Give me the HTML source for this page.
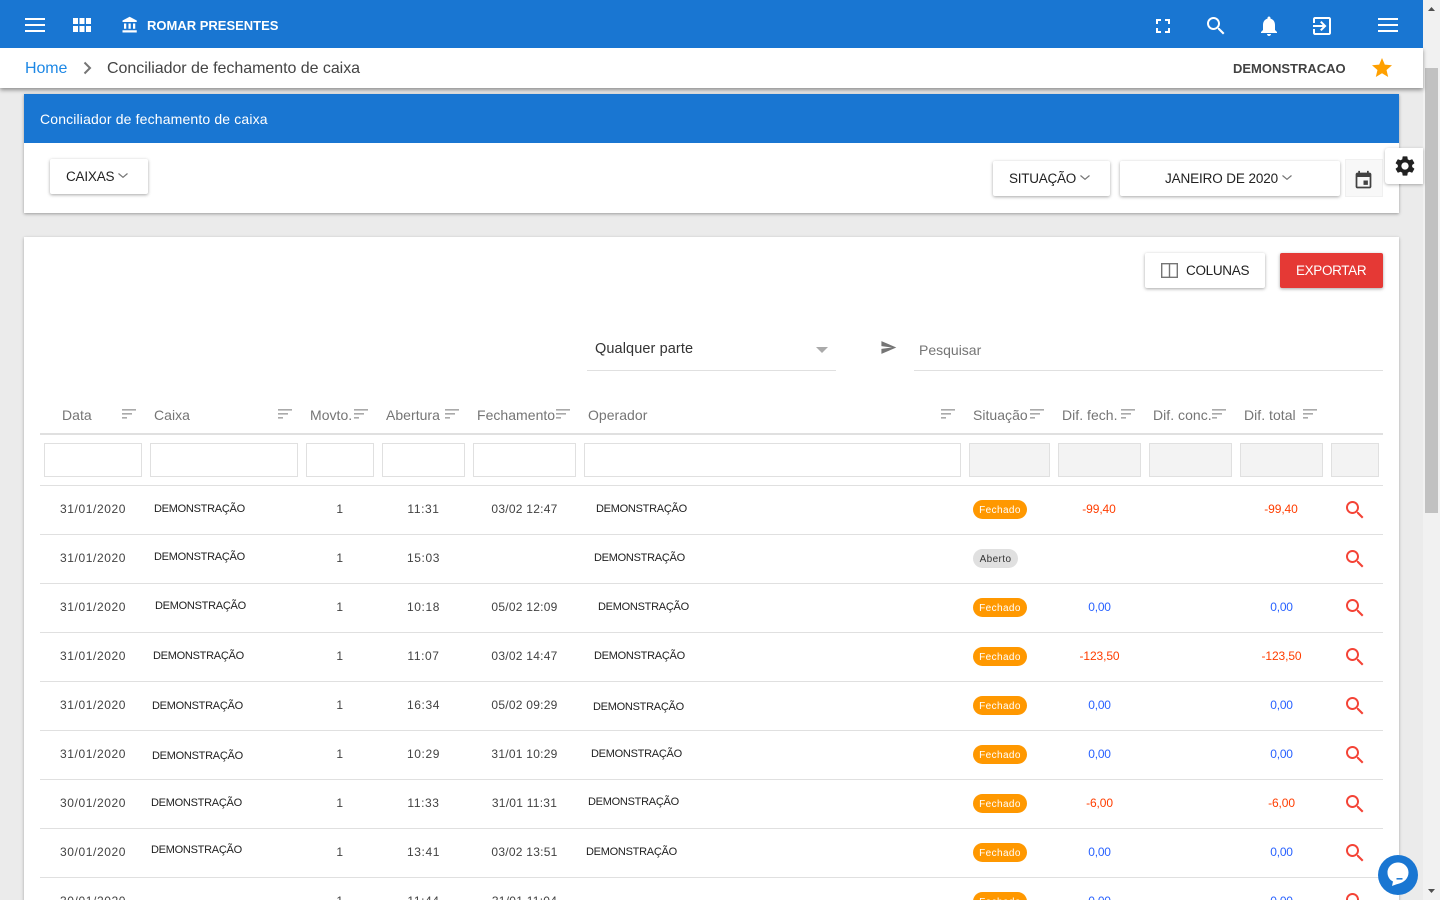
<!DOCTYPE html>
<html lang="pt"><head><meta charset="utf-8"><title>Conciliador de fechamento de caixa</title>
<style>
html,body{margin:0;padding:0;width:1440px;height:900px;overflow:hidden;background:#ebebeb;font-family:"Liberation Sans",sans-serif}
div,span,svg{position:absolute}
#w{left:0;top:0;width:1440px;height:900px;overflow:hidden;background:#ebebeb}
.t{white-space:nowrap;line-height:16px;height:16px}
.c{transform:translateX(-50%)}
.d{font-size:12px;letter-spacing:.6px;color:#424242}
.n{font-size:11px;letter-spacing:-.27px;color:#212121;margin-top:1px}
.h{font-size:14px;letter-spacing:.03px;color:#757575;top:407px}
.b{left:973px;height:19px;border-radius:10px;line-height:21px;font-size:10px;letter-spacing:.4px;text-align:center}
.f{background:#ff9800;color:#fff;width:54px}
.a{background:#e0e0e0;color:#333;width:45px}
.r{font-size:12px;color:#ff3d00;letter-spacing:-.1px}
.u{font-size:12px;color:#2962ff;letter-spacing:-.2px}
.l{left:40px;width:1343px;height:1px;background:#e0e0e0}
.box{top:443px;height:32px;border:1px solid #e0e0e0;box-sizing:content-box}
.g{background:#f3f3f3}
.btn{background:#fff;border-radius:2px;box-shadow:0 1px 3px rgba(0,0,0,.35)}
.bt{font-size:13.5px;color:#212121;margin-top:1px}
.s{width:14px;height:10px}
.m{width:24px;height:24px;left:1343px}
</style></head><body>
<div id="w">
<svg width="0" height="0" style="left:0;top:0"><defs>
<symbol id="q" viewBox="0 0 24 24"><path fill="#f44336" d="M15.5 14h-.79l-.28-.27C15.41 12.59 16 11.11 16 9.5 16 5.91 13.09 3 9.5 3S3 5.91 3 9.5 5.91 16 9.5 16c1.61 0 3.09-.59 4.23-1.57l.27.28v.79l5 4.99L20.49 19l-4.99-5zm-6 0C7.01 14 5 11.99 5 9.5S7.01 5 9.5 5 14 7.01 14 9.5 11.99 14 9.5 14z"/></symbol>
<symbol id="o" viewBox="0 0 14 10"><path fill="#aaa" d="M0 0h14v1.6H0zM0 4h10v1.6H0zM0 8h5v1.6H0z"/></symbol>
<symbol id="v" viewBox="0 0 10 5"><path fill="none" stroke="#757575" stroke-width="1.2" d="M.5.5L5 4.3 9.5.5"/></symbol>
</defs></svg>

<!-- scrollbar -->
<div style="left:1423px;top:0;width:17px;height:900px;background:#f1f1f1"></div>
<div style="left:1425px;top:68px;width:13px;height:445px;background:#c1c1c1"></div>
<svg style="left:1427px;top:6px" width="9" height="6"><path fill="#505050" d="M4.5 1L8 5H1z"/></svg>
<svg style="left:1427px;top:888px" width="9" height="6"><path fill="#505050" d="M1 1h7L4.5 5z"/></svg>

<!-- card 1 -->
<div style="left:24px;top:94px;width:1375px;height:119px;background:#fff;box-shadow:0 1px 3px rgba(0,0,0,.35)"></div>
<div style="left:24px;top:94px;width:1375px;height:49px;background:#1976d2"></div>
<div class="t" style="left:40px;top:111px;font-size:14px;letter-spacing:.15px;color:#fff">Conciliador de fechamento de caixa</div>

<div class="btn" style="left:50px;top:159px;width:98px;height:35px"></div>
<div class="t bt" style="left:66px;top:168px;letter-spacing:-.2px">CAIXAS</div>
<svg style="left:118px;top:173px" width="10" height="5"><use href="#v"/></svg>

<div class="btn" style="left:993px;top:161px;width:117px;height:35px"></div>
<div class="t bt" style="left:1009px;top:170px;letter-spacing:-.25px">SITUAÇÃO</div>
<svg style="left:1080px;top:175px" width="10" height="5"><use href="#v"/></svg>

<div class="btn" style="left:1120px;top:161px;width:220px;height:35px"></div>
<div class="t bt" style="left:1165px;top:170px;letter-spacing:-.12px">JANEIRO DE 2020</div>
<svg style="left:1282px;top:175px" width="10" height="5"><use href="#v"/></svg>

<div style="left:1345px;top:159px;width:36px;height:36px;background:#f8f8f8;border:1px solid #f0f0f0"></div>
<svg style="left:1353.4px;top:170px" width="21" height="21" viewBox="0 0 24 24"><path fill="#424242" d="M17 12h-5v5h5v-5zM16 1v2H8V1H6v2H5c-1.11 0-1.99.9-1.99 2L3 19c0 1.1.89 2 2 2h14c1.1 0 2-.9 2-2V5c0-1.1-.9-2-2-2h-1V1h-2zm3 18H5V8h14v11z"/></svg>

<!-- card 2 -->
<div style="left:24px;top:237px;width:1375px;height:700px;background:#fff;box-shadow:0 1px 3px rgba(0,0,0,.3)"></div>

<div class="btn" style="left:1145px;top:253px;width:120px;height:35px"></div>
<svg style="left:1161px;top:263px" width="17" height="15"><path fill="none" stroke="#757575" stroke-width="1.4" d="M.7.7h15.6v13.6H.7zM8.5.7v13.6"/></svg>
<div class="t bt" style="left:1186px;top:262px;letter-spacing:-.3px">COLUNAS</div>
<div style="left:1280px;top:253px;width:103px;height:35px;background:#e53935;border-radius:2px;box-shadow:0 1px 3px rgba(0,0,0,.35)"></div>
<div class="t bt" style="left:1296px;top:262px;letter-spacing:-.35px;color:#fff">EXPORTAR</div>

<div class="t" style="left:595px;top:341px;font-size:14.5px;letter-spacing:.1px;color:#333">Qualquer parte</div>
<svg style="left:816px;top:347px" width="12" height="6"><path fill="#aaa" d="M0 0h12L6 6z"/></svg>
<div style="left:587px;top:370px;width:249px;height:1px;background:#e0e0e0"></div>
<svg style="left:879.6px;top:338.5px" width="17" height="17" viewBox="0 0 24 24"><path fill="#757575" d="M2.01 21L23 12 2.01 3 2 10l15 2-15 2z"/></svg>
<div class="t" style="left:919px;top:342px;font-size:14px;color:#757575">Pesquisar</div>
<div style="left:914px;top:370px;width:469px;height:1px;background:#e0e0e0"></div>

<!-- table head -->
<div class="t h" style="left:62px">Data</div>
<div class="t h" style="left:154px">Caixa</div>
<div class="t h" style="left:310px">Movto.</div>
<div class="t h" style="left:386px">Abertura</div>
<div class="t h" style="left:477px">Fechamento</div>
<div class="t h" style="left:588px">Operador</div>
<div class="t h" style="left:973px">Situação</div>
<div class="t h" style="left:1062px">Dif. fech.</div>
<div class="t h" style="left:1153px">Dif. conc.</div>
<div class="t h" style="left:1244px">Dif. total</div>
<svg class="s" style="left:122px;top:409px"><use href="#o"/></svg>
<svg class="s" style="left:278px;top:409px"><use href="#o"/></svg>
<svg class="s" style="left:354px;top:409px"><use href="#o"/></svg>
<svg class="s" style="left:445px;top:409px"><use href="#o"/></svg>
<svg class="s" style="left:556px;top:409px"><use href="#o"/></svg>
<svg class="s" style="left:941px;top:409px"><use href="#o"/></svg>
<svg class="s" style="left:1030px;top:409px"><use href="#o"/></svg>
<svg class="s" style="left:1121px;top:409px"><use href="#o"/></svg>
<svg class="s" style="left:1212px;top:409px"><use href="#o"/></svg>
<svg class="s" style="left:1303px;top:409px"><use href="#o"/></svg>
<div class="l" style="top:433px;height:2px"></div>

<!-- filters -->
<div class="box" style="left:44px;width:96px"></div>
<div class="box" style="left:150px;width:146px"></div>
<div class="box" style="left:306px;width:66px"></div>
<div class="box" style="left:382px;width:81px"></div>
<div class="box" style="left:473px;width:101px"></div>
<div class="box" style="left:584px;width:375px"></div>
<div class="box g" style="left:969px;width:79px"></div>
<div class="box g" style="left:1058px;width:81px"></div>
<div class="box g" style="left:1149px;width:81px"></div>
<div class="box g" style="left:1240px;width:81px"></div>
<div class="box g" style="left:1331px;width:46px"></div>

<!-- row lines -->
<div class="l" style="top:485px"></div>
<div class="l" style="top:534px"></div>
<div class="l" style="top:583px"></div>
<div class="l" style="top:632px"></div>
<div class="l" style="top:681px"></div>
<div class="l" style="top:730px"></div>
<div class="l" style="top:779px"></div>
<div class="l" style="top:828px"></div>
<div class="l" style="top:877px"></div>

<!-- row 1 -->
<div class="t d" style="left:60px;top:501px">31/01/2020</div>
<div class="t n" style="left:154px;top:500px">DEMONSTRAÇÃO</div>
<div class="t d c" style="left:340px;top:501px">1</div>
<div class="t d c" style="left:423.5px;top:501px">11:31</div>
<div class="t d c" style="left:524.5px;top:501px;letter-spacing:.25px">03/02 12:47</div>
<div class="t n" style="left:596px;top:500px">DEMONSTRAÇÃO</div>
<div class="b f" style="top:500px">Fechado</div>
<div class="t r c" style="left:1099px;top:501px">-99,40</div>
<div class="t r c" style="left:1281px;top:501px">-99,40</div>
<svg class="m" style="top:498px"><use href="#q"/></svg>

<!-- row 2 -->
<div class="t d" style="left:60px;top:550px">31/01/2020</div>
<div class="t n" style="left:154px;top:548px">DEMONSTRAÇÃO</div>
<div class="t d c" style="left:340px;top:550px">1</div>
<div class="t d c" style="left:423.5px;top:550px">15:03</div>
<div class="t n" style="left:594px;top:549px">DEMONSTRAÇÃO</div>
<div class="b a" style="top:549px">Aberto</div>
<svg class="m" style="top:547px"><use href="#q"/></svg>

<!-- row 3 -->
<div class="t d" style="left:60px;top:599px">31/01/2020</div>
<div class="t n" style="left:155px;top:597px">DEMONSTRAÇÃO</div>
<div class="t d c" style="left:340px;top:599px">1</div>
<div class="t d c" style="left:423.5px;top:599px">10:18</div>
<div class="t d c" style="left:524.5px;top:599px;letter-spacing:.25px">05/02 12:09</div>
<div class="t n" style="left:598px;top:598px">DEMONSTRAÇÃO</div>
<div class="b f" style="top:598px">Fechado</div>
<div class="t u c" style="left:1099.5px;top:599px">0,00</div>
<div class="t u c" style="left:1281.5px;top:599px">0,00</div>
<svg class="m" style="top:596px"><use href="#q"/></svg>

<!-- row 4 -->
<div class="t d" style="left:60px;top:648px">31/01/2020</div>
<div class="t n" style="left:153px;top:647px">DEMONSTRAÇÃO</div>
<div class="t d c" style="left:340px;top:648px">1</div>
<div class="t d c" style="left:423.5px;top:648px">11:07</div>
<div class="t d c" style="left:524.5px;top:648px;letter-spacing:.25px">03/02 14:47</div>
<div class="t n" style="left:594px;top:647px">DEMONSTRAÇÃO</div>
<div class="b f" style="top:647px">Fechado</div>
<div class="t r c" style="left:1099.5px;top:648px">-123,50</div>
<div class="t r c" style="left:1281.5px;top:648px">-123,50</div>
<svg class="m" style="top:645px"><use href="#q"/></svg>

<!-- row 5 -->
<div class="t d" style="left:60px;top:697px">31/01/2020</div>
<div class="t n" style="left:152px;top:697px">DEMONSTRAÇÃO</div>
<div class="t d c" style="left:340px;top:697px">1</div>
<div class="t d c" style="left:423.5px;top:697px">16:34</div>
<div class="t d c" style="left:524.5px;top:697px;letter-spacing:.25px">05/02 09:29</div>
<div class="t n" style="left:593px;top:698px">DEMONSTRAÇÃO</div>
<div class="b f" style="top:696px">Fechado</div>
<div class="t u c" style="left:1099.5px;top:697px">0,00</div>
<div class="t u c" style="left:1281.5px;top:697px">0,00</div>
<svg class="m" style="top:694px"><use href="#q"/></svg>

<!-- row 6 -->
<div class="t d" style="left:60px;top:746px">31/01/2020</div>
<div class="t n" style="left:152px;top:747px">DEMONSTRAÇÃO</div>
<div class="t d c" style="left:340px;top:746px">1</div>
<div class="t d c" style="left:423.5px;top:746px">10:29</div>
<div class="t d c" style="left:524.5px;top:746px;letter-spacing:.25px">31/01 10:29</div>
<div class="t n" style="left:591px;top:745px">DEMONSTRAÇÃO</div>
<div class="b f" style="top:745px">Fechado</div>
<div class="t u c" style="left:1099.5px;top:746px">0,00</div>
<div class="t u c" style="left:1281.5px;top:746px">0,00</div>
<svg class="m" style="top:743px"><use href="#q"/></svg>

<!-- row 7 -->
<div class="t d" style="left:60px;top:795px">30/01/2020</div>
<div class="t n" style="left:151px;top:794px">DEMONSTRAÇÃO</div>
<div class="t d c" style="left:340px;top:795px">1</div>
<div class="t d c" style="left:423.5px;top:795px">11:33</div>
<div class="t d c" style="left:524.5px;top:795px;letter-spacing:.25px">31/01 11:31</div>
<div class="t n" style="left:588px;top:793px">DEMONSTRAÇÃO</div>
<div class="b f" style="top:794px">Fechado</div>
<div class="t r c" style="left:1099.5px;top:795px">-6,00</div>
<div class="t r c" style="left:1281.5px;top:795px">-6,00</div>
<svg class="m" style="top:792px"><use href="#q"/></svg>

<!-- row 8 -->
<div class="t d" style="left:60px;top:844px">30/01/2020</div>
<div class="t n" style="left:151px;top:841px">DEMONSTRAÇÃO</div>
<div class="t d c" style="left:340px;top:844px">1</div>
<div class="t d c" style="left:423.5px;top:844px">13:41</div>
<div class="t d c" style="left:524.5px;top:844px;letter-spacing:.25px">03/02 13:51</div>
<div class="t n" style="left:586px;top:843px">DEMONSTRAÇÃO</div>
<div class="b f" style="top:843px">Fechado</div>
<div class="t u c" style="left:1099.5px;top:844px">0,00</div>
<div class="t u c" style="left:1281.5px;top:844px">0,00</div>
<svg class="m" style="top:841px"><use href="#q"/></svg>

<!-- row 9 -->
<div class="t d" style="left:60px;top:893px">30/01/2020</div>
<div class="t d c" style="left:340px;top:893px">1</div>
<div class="t d c" style="left:423.5px;top:893px">11:44</div>
<div class="t d c" style="left:524.5px;top:893px;letter-spacing:.25px">31/01 11:04</div>
<div class="b f" style="top:892px">Fechado</div>
<div class="t u c" style="left:1099.5px;top:893px">0,00</div>
<div class="t u c" style="left:1281.5px;top:893px">0,00</div>
<svg class="m" style="top:890px"><use href="#q"/></svg>

<!-- breadcrumb -->
<div style="left:0;top:48px;width:1423px;height:40px;background:#fff;box-shadow:0 2px 4px rgba(0,0,0,.4)"></div>
<div class="t" style="left:25px;top:61px;font-size:16px;letter-spacing:-.1px;color:#1e88e5">Home</div>
<svg style="left:83px;top:61px" width="9" height="14"><path fill="none" stroke="#757575" stroke-width="2" d="M1.5 1.5L7 7l-5.5 5.5"/></svg>
<div class="t" style="left:107px;top:61px;font-size:16px;letter-spacing:-.04px;color:#444">Conciliador de fechamento de caixa</div>
<div class="t" style="left:1233px;top:61px;font-size:13px;font-weight:bold;color:#424242">DEMONSTRACAO</div>
<svg style="left:1370px;top:56px" width="24" height="24" viewBox="0 0 24 24"><path fill="#ffa000" d="M12 17.27L18.18 21l-1.64-7.03L22 9.24l-7.19-.61L12 2 9.19 8.63 2 9.24l5.46 4.73L5.82 21z"/></svg>

<!-- top bar -->
<div style="left:0;top:0;width:1423px;height:48px;background:#1976d2"></div>
<svg style="left:25px;top:18px" width="20" height="14"><path fill="#fff" d="M0 0h20v2H0zM0 6h20v2H0zM0 12h20v2H0z"/></svg>
<svg style="left:73px;top:18px" width="18" height="14"><path fill="#fff" d="M0 0h5v6H0zM6.5 0h5v6h-5zM13 0h5v6h-5zM0 8h5v6H0zM6.5 8h5v6h-5zM13 8h5v6h-5z"/></svg>
<svg style="left:121px;top:16px" width="18" height="18" viewBox="0 0 24 24"><path fill="#fff" d="M4 10v7h3v-7H4zm6 0v7h3v-7h-3zM2 22h19v-3H2v3zm14-12v7h3v-7h-3zm-4.5-9L2 6v2h19V6l-9.5-5z"/></svg>
<div class="t" style="left:147px;top:18px;font-size:13px;font-weight:bold;color:#fff">ROMAR PRESENTES</div>
<svg style="left:1151px;top:14px" width="24" height="24" viewBox="0 0 24 24"><path fill="#fff" d="M7 14H5v5h5v-2H7v-3zm-2-4h2V7h3V5H5v5zm12 7h-3v2h5v-5h-2v3zM14 5v2h3v3h2V5h-5z"/></svg>
<svg style="left:1204px;top:14px" width="24" height="24" viewBox="0 0 24 24"><path fill="#fff" d="M15.5 14h-.79l-.28-.27C15.41 12.59 16 11.11 16 9.5 16 5.91 13.09 3 9.5 3S3 5.91 3 9.5 5.91 16 9.5 16c1.61 0 3.09-.59 4.23-1.57l.27.28v.79l5 4.99L20.49 19l-4.99-5zm-6 0C7.01 14 5 11.99 5 9.5S7.01 5 9.5 5 14 7.01 14 9.5 11.99 14 9.5 14z"/></svg>
<svg style="left:1257px;top:14px" width="24" height="24" viewBox="0 0 24 24"><path fill="#fff" d="M12 22c1.1 0 2-.9 2-2h-4c0 1.1.9 2 2 2zm6-6v-5c0-3.07-1.63-5.64-4.5-6.32V4c0-.83-.67-1.5-1.5-1.5s-1.5.67-1.5 1.5v.68C7.64 5.36 6 7.92 6 11v5l-2 2v1h16v-1l-2-2z"/></svg>
<svg style="left:1310px;top:14px" width="24" height="24" viewBox="0 0 24 24"><path fill="#fff" d="M10.09 15.59L11.5 17l5-5-5-5-1.41 1.41L12.67 11H3v2h9.67l-2.58 2.59zM19 3H5c-1.11 0-2 .9-2 2v4h2V5h14v14H5v-4H3v4c0 1.1.89 2 2 2h14c1.1 0 2-.9 2-2V5c0-1.1-.9-2-2-2z"/></svg>
<svg style="left:1378px;top:18px" width="20" height="14"><path fill="#fff" d="M0 0h20v2H0zM0 6h20v2H0zM0 12h20v2H0z"/></svg>

<!-- settings tab -->
<div style="left:1385px;top:148px;width:38px;height:36px;background:#fff;border-radius:3px 0 0 3px;box-shadow:0 1px 3px rgba(0,0,0,.3)"></div>
<svg style="left:1393px;top:154px" width="24" height="24" viewBox="0 0 24 24"><path fill="#212121" d="M19.14 12.94c.04-.3.06-.61.06-.94 0-.32-.02-.64-.07-.94l2.03-1.58c.18-.14.23-.41.12-.61l-1.92-3.32c-.12-.22-.37-.29-.59-.22l-2.39.96c-.5-.38-1.03-.7-1.62-.94l-.36-2.54c-.04-.24-.24-.41-.48-.41h-3.84c-.24 0-.43.17-.47.41l-.36 2.54c-.59.24-1.13.57-1.62.94l-2.39-.96c-.22-.08-.47 0-.59.22L2.74 8.87c-.12.21-.08.47.12.61l2.03 1.58c-.05.3-.09.63-.09.94s.02.64.07.94l-2.03 1.58c-.18.14-.23.41-.12.61l1.92 3.32c.12.22.37.29.59.22l2.39-.96c.5.38 1.03.7 1.62.94l.36 2.54c.05.24.24.41.48.41h3.84c.24 0 .44-.17.47-.41l.36-2.54c.59-.24 1.13-.56 1.62-.94l2.39.96c.22.08.47 0 .59-.22l1.92-3.32c.12-.22.07-.47-.12-.61l-2.01-1.58zM12 15.6c-1.98 0-3.6-1.62-3.6-3.6s1.62-3.6 3.6-3.6 3.6 1.62 3.6 3.6-1.62 3.6-3.6 3.6z"/></svg>

<!-- chat -->
<svg style="left:1378px;top:855px" width="40" height="40"><circle cx="20" cy="20" r="20" fill="#1976d2"/><path fill="#fff" d="M20 7.5c5.8 0 10.5 4.3 10.5 10 0 5.8-4.5 10-10 11.2-2.5.7-5 1.6-6.5 2.3l1-4.5C11.5 24.8 9.5 21.5 9.5 17.5c0-5.7 4.7-10 10.5-10z"/><path stroke="#1976d2" stroke-width="1.5" d="M18.5 23.8h6"/></svg>
</div>
</body></html>
